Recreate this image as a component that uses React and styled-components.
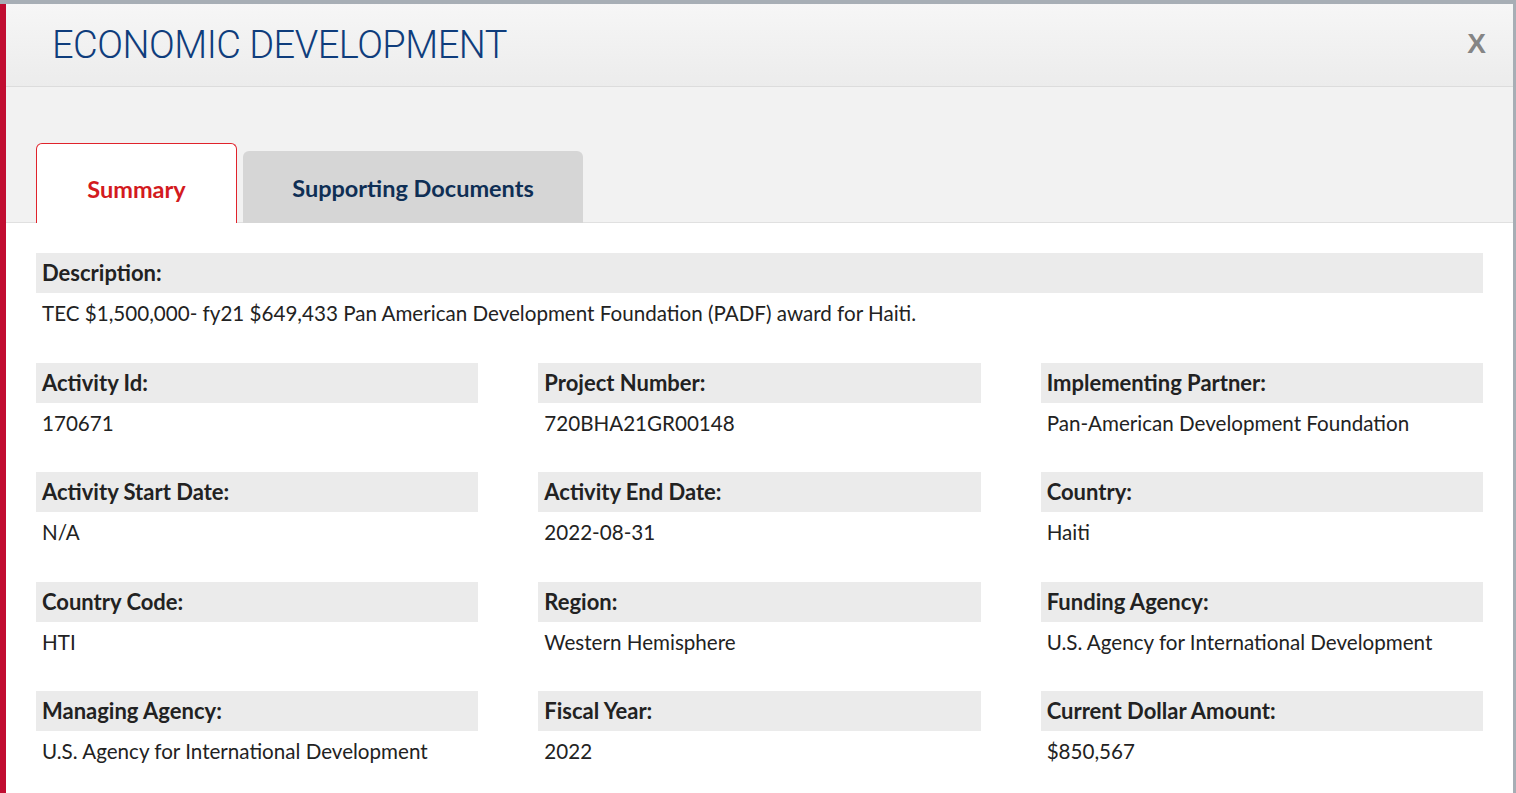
import React from 'react';
import styled, { createGlobalStyle } from 'styled-components';

const GlobalStyle = createGlobalStyle`
    html, body {
        margin: 0;
        padding: 0;
        background: #a7aeb5;
        font-family: Lato, 'Open Sans', sans-serif;
        overflow: hidden;
    }
`;

const fields = [
    ['Activity Id:', '170671'],
    ['Project Number:', '720BHA21GR00148'],
    ['Implementing Partner:', 'Pan-American Development Foundation'],
    ['Activity Start Date:', 'N/A'],
    ['Activity End Date:', '2022-08-31'],
    ['Country:', 'Haiti'],
    ['Country Code:', 'HTI'],
    ['Region:', 'Western Hemisphere'],
    ['Funding Agency:', 'U.S. Agency for International Development'],
    ['Managing Agency:', 'U.S. Agency for International Development'],
    ['Fiscal Year:', '2022'],
    ['Current Dollar Amount:', '$850,567'],
];

const App = () => {
    return (
        <>
            <GlobalStyle />
            <Modal>
                <Header>
                    <Title>ECONOMIC DEVELOPMENT</Title>
                    <Close>X</Close>
                </Header>
                <TabBar>
                    <Tab active>Summary</Tab>
                    <Tab>Supporting Documents</Tab>
                </TabBar>
                <Body>
                    <Field>
                        <Label>Description:</Label>
                        <Value>TEC $1,500,000- fy21 $649,433 Pan American Development Foundation (PADF) award for Haiti.</Value>
                    </Field>
                    <Grid>
                        {fields.map(([label, value]) => (
                            <Field key={label}>
                                <Label>{label}</Label>
                                <Value>{value}</Value>
                            </Field>
                        ))}
                    </Grid>
                </Body>
            </Modal>
        </>
    );
};

const Modal = styled.div`
    margin: 4px 3px 0 0;
    height: calc(100vh - 4px);
    background: #fff;
    border-left: 6px solid #c10d31;
    overflow: hidden;
`;

const Header = styled.header`
    display: flex;
    align-items: center;
    justify-content: space-between;
    height: 83px;
    padding: 0 27px 0 46px;
    background: linear-gradient(#f6f6f6, #ececec);
    border-bottom: 1px solid #dcdcdc;
    box-sizing: border-box;
`;

const Title = styled.h1`
    margin: 0;
    font-family: Roboto, Lato, sans-serif;
    font-size: 38px;
    font-weight: 300;
    letter-spacing: -0.5px;
    color: #0f3d7c;
`;

const Close = styled.span`
    font-family: 'Liberation Sans', Arial, sans-serif;
    font-size: 28px;
    font-weight: 700;
    color: #858585;
    margin-top: -2px;
`;

const TabBar = styled.nav`
    display: flex;
    align-items: flex-end;
    gap: 6px;
    height: 136px;
    padding: 0 30px;
    background: #f2f2f2;
    border-bottom: 1px solid #e0e0e0;
    box-sizing: border-box;
`;

const Tab = styled.div`
    display: flex;
    align-items: center;
    justify-content: center;
    box-sizing: border-box;
    height: ${p => (p.active ? '80px' : '72px')};
    width: ${p => (p.active ? '201px' : '340px')};
    margin-bottom: -1px;
    padding-top: ${p => (p.active ? '10px' : '2px')};
    border-radius: 6px 6px 0 0;
    border: ${p => (p.active ? '1px solid #e0232b' : 'none')};
    border-bottom: none;
    background: ${p => (p.active ? '#fff' : '#d6d6d6')};
    color: ${p => (p.active ? '#d31a20' : '#0f2f55')};
    font-size: 23.5px;
    font-weight: 700;
`;

const Body = styled.main`
    padding: 30px 30px 0 30px;
`;

const Grid = styled.div`
    display: grid;
    grid-template-columns: repeat(3, 1fr);
    column-gap: 60px;
`;

const Field = styled.section`
    margin-bottom: 29.6px;
`;

const Label = styled.div`
    height: 40px;
    line-height: 40px;
    padding: 0 6px;
    background: #ebebeb;
    font-size: 22px;
    font-weight: 700;
    color: #222;
`;

const Value = styled.div`
    height: 40px;
    line-height: 40px;
    padding: 0 6px;
    font-size: 20.6px;
    color: #222;
`;

export default App;
